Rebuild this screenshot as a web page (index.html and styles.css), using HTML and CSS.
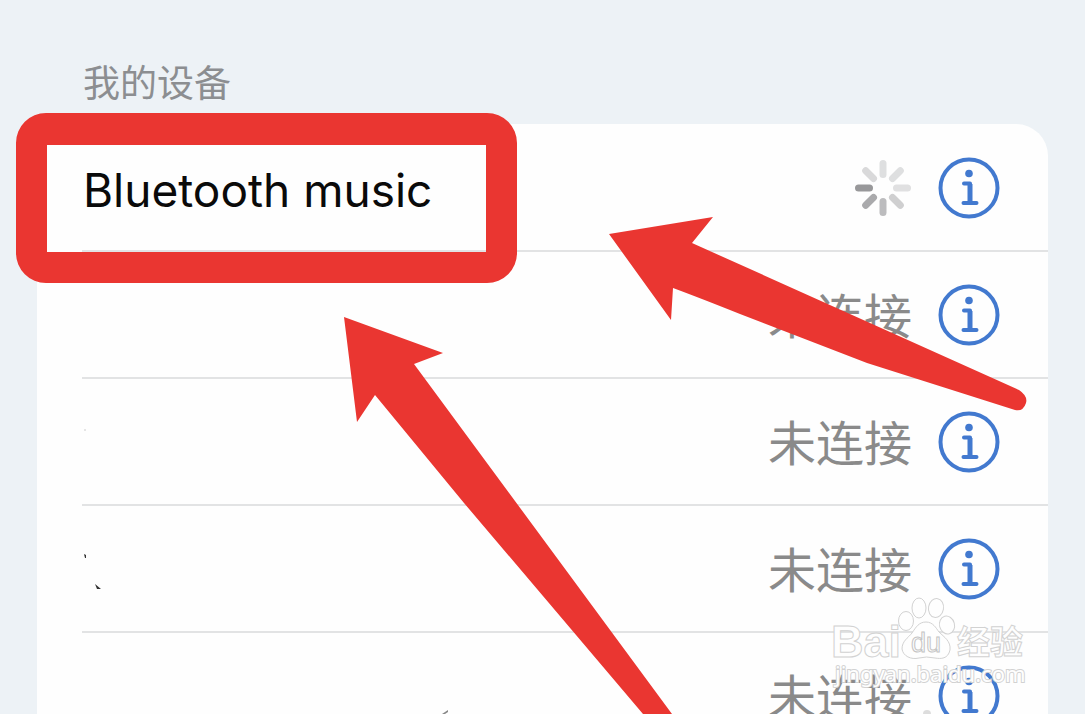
FILE: index.html
```html
<!DOCTYPE html>
<html lang="zh-CN">
<head>
    <meta charset="UTF-8">
    <meta name="viewport" content="width=device-width, initial-scale=1.0">
    <title>我的设备</title>
    <link rel="stylesheet" href="styles.css">
</head>
<body>
    <!-- Shared icon -->
    <svg class="sprite" aria-hidden="true">
        <symbol id="info" viewBox="0 0 62 62">
            <circle cx="31" cy="31" r="28.5" fill="none" stroke="#4279cf" stroke-width="4"/>
            <circle cx="31" cy="16.5" r="3.8" fill="#4279cf"/>
            <path d="M26 26.5h6v19M25.5 46h13" fill="none" stroke="#4279cf" stroke-width="4" stroke-linecap="round" stroke-linejoin="round"/>
            <path d="M32 27v18" fill="none" stroke="#4279cf" stroke-width="5"/>
        </symbol>
    </svg>

    <main class="page">
        <h1>我的设备</h1>

        <!-- Device list -->
        <ul class="devices">
            <li class="device">
                <span class="name">Bluetooth music</span>
                <svg class="spinner" viewBox="0 0 58 58" role="img" aria-label="正在连接">
                    <g stroke-width="7" stroke-linecap="round">
                        <path d="M29 4.5v11" stroke="#dedfe0"/>
                        <path d="M46.3 11.7l-7.8 7.8" stroke="#dedfe0"/>
                        <path d="M53.5 29h-11" stroke="#e0e0e1"/>
                        <path d="M46.3 46.3l-7.8-7.8" stroke="#cfcfd0"/>
                        <path d="M29 53.5v-11" stroke="#bcbcbe"/>
                        <path d="M11.7 46.3l7.8-7.8" stroke="#aaaaac"/>
                        <path d="M4.5 29h11" stroke="#98989a"/>
                        <path d="M11.7 11.7l7.8 7.8" stroke="#d9d9da"/>
                    </g>
                </svg>
                <button class="info" aria-label="详细信息"><svg><use href="#info"/></svg></button>
            </li>
            <li class="device">
                <span class="name"></span>
                <span class="status">未连接</span>
                <button class="info" aria-label="详细信息"><svg><use href="#info"/></svg></button>
            </li>
            <li class="device">
                <span class="name"></span>
                <span class="status">未连接</span>
                <button class="info" aria-label="详细信息"><svg><use href="#info"/></svg></button>
            </li>
            <li class="device">
                <span class="name"></span>
                <span class="status">未连接</span>
                <button class="info" aria-label="详细信息"><svg><use href="#info"/></svg></button>
            </li>
            <li class="device">
                <span class="name"></span>
                <span class="status">未连接</span>
                <button class="info" aria-label="详细信息"><svg><use href="#info"/></svg></button>
            </li>
        </ul>

        <!-- Red marker box, arrows and pen specks -->
        <svg class="marks" width="1085" height="714" viewBox="0 0 1085 714" aria-hidden="true">
            <path fill="#ea3631" fill-rule="evenodd" d="M46 113H487A30 30 0 0 1 517 143V253A30 30 0 0 1 487 283H46A30 30 0 0 1 16 253V143A30 30 0 0 1 46 113ZM47 145V252H486V145Z"/>
            <path fill="#ea3631" d="M609 234L713 217L692 243L1019 390Q1028 396 1026 403Q1023 412 1015 410L867 363L740 314Q700 298 673 288L671 320Z"/>
            <path fill="#ea3631" d="M344 317L443 353L414 364L672 714H643L464 503L375 395L357 422Z"/>
            <path fill="#333" d="M95 584l6 5h-4zM84 554l2 1v3l-1 0z"/>
            <path fill="#888" d="M442 714l6-4v2l-3 2z"/>
            <circle cx="85" cy="430" r="1" fill="#ddd"/>
        </svg>

        <!-- Watermark -->
        <svg class="watermark" width="220" height="124" viewBox="0 0 220 124">
            <g class="outline">
                <ellipse cx="86" cy="31" rx="7.5" ry="9.5"/>
                <ellipse cx="99" cy="18" rx="7" ry="10"/>
                <ellipse cx="116" cy="18" rx="7.5" ry="9.5" transform="rotate(10 116 18)"/>
                <ellipse cx="127" cy="35" rx="7.5" ry="9" transform="rotate(-15 127 35)"/>
                <path d="M106 32C113 32 116 38 119 42C124 47 131 51 130 60C128 69 121 69 115 68Q106 66 99 68C91 70 83 66 82 59C82 51 88 48 92 43C96 37 99 32 106 32Z"/>
                <text class="bai" x="11" y="67">Bai</text>
                <text class="du" x="91" y="62">du</text>
                <text class="cjk" x="137" y="64">经验</text>
            </g>
            <text class="url" x="15" y="92">jingyan.baidu.com</text>
            <circle cx="107" cy="124" r="4" fill="#ddd"/>
        </svg>
    </main>
</body>
</html>
```
FILE: styles.css
```css
body {
    margin: 0;
    background: #edf2f6;
    font-family: Inter, "Noto Sans CJK SC", sans-serif;
}

.sprite {
    display: none;
}

.page {
    position: relative;
    height: 100vh;
    box-sizing: border-box;
    padding: 60px 37px 0;
    overflow: hidden;
}

h1 {
    margin: 0 0 16px;
    padding-left: 46px;
    font-size: 37px;
    font-weight: 400;
    line-height: 48px;
    color: #8c8e91;
}

/* Device list */
.devices {
    margin: 0;
    padding: 1px 0 0 45px;
    list-style: none;
    background: #fefefe;
    border-radius: 32px;
}

.device {
    display: flex;
    align-items: center;
    height: 127px;
    box-sizing: border-box;
    padding-right: 48px;
    border-bottom: 2px solid #e2e3e4;
}

.name {
    flex: 1;
    padding: 4px 0 0 1px;
    font-size: 46px;
    line-height: 56px;
    color: #0a0a0a;
}

.status {
    padding-top: 4px;
    font-size: 48px;
    font-weight: 400;
    line-height: 64px;
    color: #8a8a8a;
}

.spinner {
    width: 58px;
    height: 58px;
}

.info {
    width: 62px;
    height: 62px;
    margin-left: 26px;
    padding: 0;
    border: none;
    background: none;
    cursor: pointer;
}

.info svg {
    display: block;
    width: 62px;
    height: 62px;
}

/* Layers over the list */
.marks {
    position: absolute;
    top: 0;
    left: 0;
    pointer-events: none;
}

.watermark {
    position: absolute;
    right: 45px;
    bottom: 0;
    pointer-events: none;
}

.outline {
    fill: #fefefe;
    stroke: #d2d2d2;
    stroke-width: 1px;
}

.bai {
    font: bold 45px "Liberation Sans", sans-serif;
}

.du {
    font: 27px "Liberation Sans", sans-serif;
    stroke: #c4c4c4;
}

.cjk {
    font: bold 33px "Noto Sans CJK SC", sans-serif;
}

.url {
    font: 22px "Noto Sans", sans-serif;
    fill: #fefefe;
    stroke: #d2d2d2;
    stroke-width: 2px;
    paint-order: stroke;
}
```
